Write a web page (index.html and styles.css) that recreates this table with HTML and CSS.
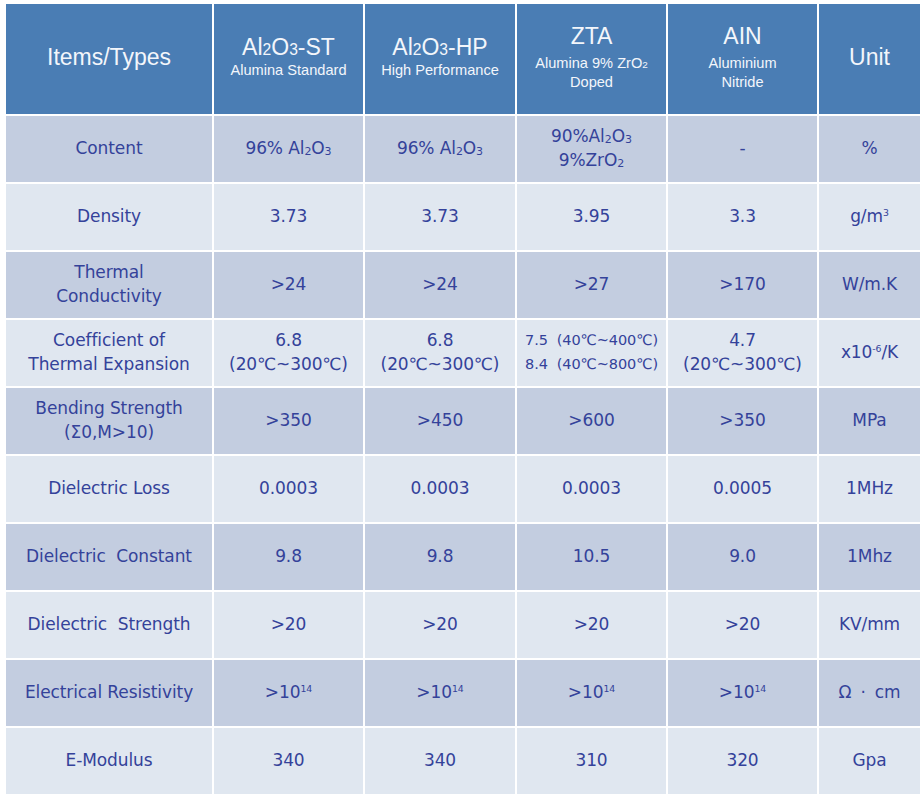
FILE: index.html
```html
<!DOCTYPE html>
<html>
<head>
<meta charset="utf-8">
<link rel="stylesheet" href="styles.css">
</head>
<body>
<div class="table">
  <div class="hd"><div class="ht">Items/Types</div></div>
  <div class="hd"><div class="ht">Al<sub>2</sub>O<sub>3</sub>-ST</div><div class="hs">Alumina Standard</div></div>
  <div class="hd"><div class="ht">Al<sub>2</sub>O<sub>3</sub>-HP</div><div class="hs">High Performance</div></div>
  <div class="hd up"><div class="ht">ZTA</div><div class="hs">Alumina 9% ZrO<sub>2</sub><br>Doped</div></div>
  <div class="hd up"><div class="ht">AIN</div><div class="hs">Aluminium<br>Nitride</div></div>
  <div class="hd"><div class="ht">Unit</div></div>

  <div class="c d"><span>Content</span></div>
  <div class="c d"><span>96% Al<sub>2</sub>O<sub>3</sub></span></div>
  <div class="c d"><span>96% Al<sub>2</sub>O<sub>3</sub></span></div>
  <div class="c d"><span>90%Al<sub>2</sub>O<sub>3</sub><br>9%ZrO<sub>2</sub></span></div>
  <div class="c d"><span>-</span></div>
  <div class="c d"><span>%</span></div>

  <div class="c l"><span>Density</span></div>
  <div class="c l"><span>3.73</span></div>
  <div class="c l"><span>3.73</span></div>
  <div class="c l"><span>3.95</span></div>
  <div class="c l"><span>3.3</span></div>
  <div class="c l"><span>g/m<sup>3</sup></span></div>

  <div class="c d"><span>Thermal<br>Conductivity</span></div>
  <div class="c d"><span>&gt;24</span></div>
  <div class="c d"><span>&gt;24</span></div>
  <div class="c d"><span>&gt;27</span></div>
  <div class="c d"><span>&gt;170</span></div>
  <div class="c d"><span>W/m.K</span></div>

  <div class="c l"><span>Coefficient of<br>Thermal Expansion</span></div>
  <div class="c l"><span>6.8<br>(20℃~300℃)</span></div>
  <div class="c l"><span>6.8<br>(20℃~300℃)</span></div>
  <div class="c l small"><span>7.5&nbsp; (40℃~400℃)<br>8.4&nbsp; (40℃~800℃)</span></div>
  <div class="c l"><span>4.7<br>(20℃~300℃)</span></div>
  <div class="c l"><span>x10<sup>-6</sup>/K</span></div>

  <div class="c d"><span>Bending Strength<br>(Σ0,M&gt;10)</span></div>
  <div class="c d"><span>&gt;350</span></div>
  <div class="c d"><span>&gt;450</span></div>
  <div class="c d"><span>&gt;600</span></div>
  <div class="c d"><span>&gt;350</span></div>
  <div class="c d"><span>MPa</span></div>

  <div class="c l"><span>Dielectric Loss</span></div>
  <div class="c l"><span>0.0003</span></div>
  <div class="c l"><span>0.0003</span></div>
  <div class="c l"><span>0.0003</span></div>
  <div class="c l"><span>0.0005</span></div>
  <div class="c l"><span>1MHz</span></div>

  <div class="c d"><span>Dielectric&nbsp; Constant</span></div>
  <div class="c d"><span>9.8</span></div>
  <div class="c d"><span>9.8</span></div>
  <div class="c d"><span>10.5</span></div>
  <div class="c d"><span>9.0</span></div>
  <div class="c d"><span>1Mhz</span></div>

  <div class="c l"><span>Dielectric&nbsp; Strength</span></div>
  <div class="c l"><span>&gt;20</span></div>
  <div class="c l"><span>&gt;20</span></div>
  <div class="c l"><span>&gt;20</span></div>
  <div class="c l"><span>&gt;20</span></div>
  <div class="c l"><span>KV/mm</span></div>

  <div class="c d"><span>Electrical Resistivity</span></div>
  <div class="c d"><span>&gt;10<sup>14</sup></span></div>
  <div class="c d"><span>&gt;10<sup>14</sup></span></div>
  <div class="c d"><span>&gt;10<sup>14</sup></span></div>
  <div class="c d"><span>&gt;10<sup>14</sup></span></div>
  <div class="c d"><span>Ω<span class="dot">·</span>cm</span></div>

  <div class="c l"><span>E-Modulus</span></div>
  <div class="c l"><span>340</span></div>
  <div class="c l"><span>340</span></div>
  <div class="c l"><span>310</span></div>
  <div class="c l"><span>320</span></div>
  <div class="c l"><span>Gpa</span></div>
</div>
</body>
</html>
```
FILE: styles.css
```css
html, body {
  margin: 0;
  padding: 0;
  background: #ffffff;
}
body {
  padding: 4px 0 0 6px;
}
.table {
  display: grid;
  grid-template-columns: 206px 149px 150px 149px 149px 101px;
  grid-template-rows: 110px repeat(10, 66px);
  gap: 2px;
  width: 913px;
  background: #ffffff;
}
.hd {
  background: #4a7db4;
  color: #f3f6fb;
  font-family: "Liberation Sans", Arial, sans-serif;
  display: flex;
  flex-direction: column;
  align-items: center;
  justify-content: center;
  text-align: center;
  padding-bottom: 4px;
}
.hd.up {
  justify-content: flex-start;
  padding-top: 19px;
  padding-bottom: 0;
}
.ht {
  font-size: 23px;
  line-height: 26px;
}
.hs {
  font-size: 14.6px;
  line-height: 19px;
  margin-top: 1px;
}
.hd.up .hs {
  margin-top: 5px;
}
.hd sub {
  font-size: 0.68em;
  line-height: 0;
  vertical-align: baseline;
  position: relative;
  top: 0.02em;
}
.c {
  display: flex;
  align-items: center;
  justify-content: center;
  text-align: center;
  font-family: "DejaVu Sans", sans-serif;
  font-size: 17px;
  line-height: 24px;
  color: #34429a;
  padding-bottom: 3px;
  letter-spacing: -0.1px;
}
.c.d { background: #c3cde0; }
.c.l { background: #e0e7f0; }
.c.small {
  font-size: 14.5px;
  line-height: 24px;
}
.c .dot {
  margin: 0 9px;
}
.c sub {
  font-size: 0.65em;
  line-height: 0;
  vertical-align: baseline;
  position: relative;
  top: 0.12em;
}
.c sup {
  font-size: 0.55em;
  line-height: 0;
  vertical-align: baseline;
  position: relative;
  top: -0.6em;
}
```
